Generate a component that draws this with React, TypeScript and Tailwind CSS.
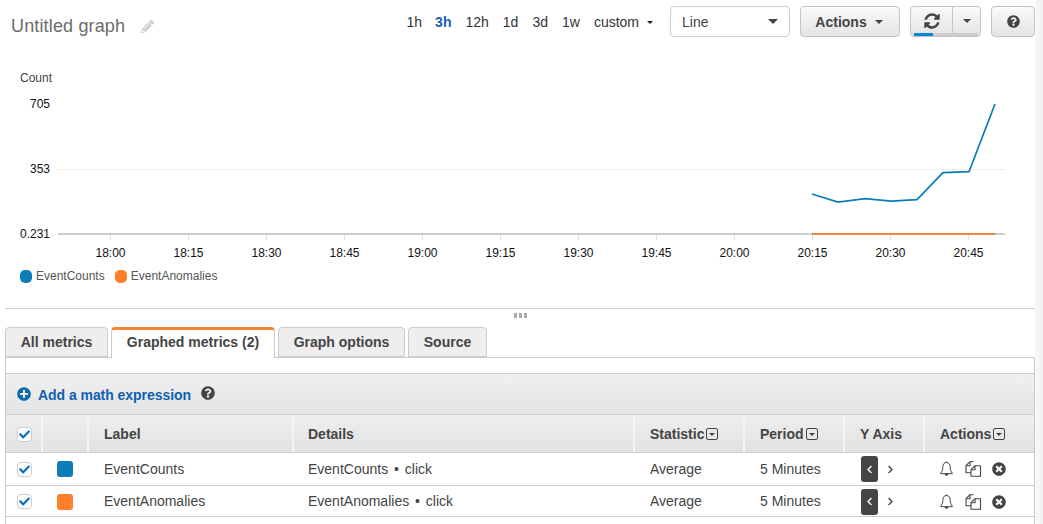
import { FaPencilAlt, FaQuestionCircle, FaTimesCircle, FaPlusCircle, FaCheck, FaChevronLeft, FaChevronRight } from 'react-icons/fa';

const tabs = [
  { label: 'All metrics', width: 'w-[103px]' },
  { label: 'Graphed metrics (2)', width: 'w-[164px]', active: true },
  { label: 'Graph options', width: 'w-[127px]' },
  { label: 'Source', width: 'w-[79px]' },
];

const ranges = ['1h', '3h', '12h', '1d', '3d', '1w'];
const xTicks = ['18:00', '18:15', '18:30', '18:45', '19:00', '19:15', '19:30', '19:45', '20:00', '20:15', '20:30', '20:45'];

const metrics = [
  { label: 'EventCounts', color: 'bg-[#0b7eb8]', height: 'h-[33px]' },
  { label: 'EventAnomalies', color: 'bg-[#ff7f2a]', height: 'h-[31px] pt-[1px]' },
];

const columns = 'grid grid-cols-[37px_46px_205px_341px_110px_100px_80px_1fr]';

function Caret({ className }: { className?: string }) {
  return (
    <svg width="10" height="5" viewBox="0 0 10 5" className={className} fill="currentColor">
      <path d="M0 0h10L5 5z" />
    </svg>
  );
}

function RefreshIcon() {
  return (
    <svg width="18" height="18" viewBox="0 0 1792 1792" fill="#444">
      <path d="M1639 1056q0 5-1 7-64 268-268 434.5t-478 166.5q-146 0-282.5-55t-243.5-157l-129 129q-19 19-45 19t-45-19-19-45v-448q0-26 19-45t45-19h448q26 0 45 19t19 45-19 45l-137 137q71 66 161 102t187 36q134 0 250-65t186-179q11-17 53-117 8-23 30-23h192q13 0 22.5 9.5t9.5 22.5zm25-800v448q0 26-19 45t-45 19h-448q-26 0-45-19t-19-45 19-45l138-138q-148-137-349-137-134 0-250 65t-186 179q-11 17-53 117-8 23-30 23h-199q-13 0-22.5-9.5t-9.5-22.5v-7q65-268 270-434.5t480-166.5q146 0 284 55.5t245 156.5l130-129q19-19 45-19t45 19 19 45z" />
    </svg>
  );
}

function BellIcon() {
  return (
    <svg width="13" height="16" viewBox="0 0 13 16" fill="none" stroke="#444" strokeWidth="1">
      <path d="M6.5 1.5c-2.4 0-3.6 1.8-3.6 4 0 3.2-.9 5-2.2 6.6v.6h11.6v-.6c-1.3-1.6-2.2-3.4-2.2-6.6 0-2.2-1.2-4-3.6-4z" />
      <path d="M6.5 .5v1" />
      <path d="M5 13.2c.2 1.6 2.8 1.6 3 0z" fill="#444" />
    </svg>
  );
}

function PagesIcon() {
  return (
    <svg width="17" height="16" viewBox="0 0 17 16" fill="none" stroke="#444" strokeWidth="1.1" strokeLinejoin="round">
      <path d="M8.5 .7H5L1 4.7v7h5" />
      <path d="M5 .7v4H1" />
      <path d="M15.5 4.7H10L6 8.7v6.6h9.5z" fill="#fff" />
      <path d="M10 4.7v4H6" />
    </svg>
  );
}

function Checkbox() {
  return (
    <span className="flex h-[15px] w-[15px] items-center justify-center rounded-[4px] border border-[#ccc] bg-white">
      <FaCheck className="text-[11px] text-[#0a6ebd]" />
    </span>
  );
}

function SortBox() {
  return (
    <span className="ml-[2px] flex h-[12px] w-[12px] items-center justify-center rounded-[2px] border border-[#444]">
      <Caret className="h-[3px] w-[6px] text-[#444]" />
    </span>
  );
}

function HeadCell({ children, className }: { children?: React.ReactNode; className?: string }) {
  return (
    <div className={`flex items-center border-r-2 border-[#f4f4f4] ${className ?? ''}`}>{children}</div>
  );
}

function Chart() {
  return (
    <svg width="1035" height="205" viewBox="0 60 1035 205" className="block" style={{ fontFamily: '"Liberation Sans", sans-serif' }}>
      <text x="20" y="82" fontSize="12" fill="#444">Count</text>
      <text x="30" y="108" fontSize="12" fill="#111">705</text>
      <text x="30" y="173" fontSize="12" fill="#111">353</text>
      <text x="20" y="238" fontSize="12" fill="#111">0.231</text>
      <line x1="58" y1="169.5" x2="1005" y2="169.5" stroke="#eee" />
      <line x1="58" y1="234" x2="1005" y2="234" stroke="#ccc" strokeWidth="2" />
      {xTicks.map((tick, i) => {
        const x = 110.5 + i * 78;
        return (
          <g key={tick}>
            <line x1={x} y1="235" x2={x} y2="240" stroke="#ddd" />
            <text x={x} y="257" fontSize="12" fill="#111" textAnchor="middle">{tick}</text>
          </g>
        );
      })}
      <line x1="812" y1="234" x2="995" y2="234" stroke="#f0873f" strokeWidth="2" />
      <polyline
        points="812,194 838,202 865,198.7 891,201 917,199.7 943,172.7 969,171.7 995,104"
        fill="none"
        stroke="#0b7eb8"
        strokeWidth="1.75"
      />
    </svg>
  );
}

export default function App() {
  return (
    <div className="flex h-[524px] w-[1043px] overflow-hidden bg-white font-['Liberation_Sans',sans-serif] text-[14px] text-[#444]">
      <div className="w-[1035px] shrink-0">
        {/* Header */}
        <div className="flex h-[60px] items-start pl-[11px]">
          <h1 className="mt-[14px] text-[18px] leading-[24px] tracking-[0.15px] text-[#6b6b6b]">Untitled graph</h1>
          <FaPencilAlt className="ml-[16px] mt-[20px] text-[13px] text-[#ccc]" />
          <div className="ml-auto mt-[6px] flex items-start">
            <div className="mt-[6px] flex items-center text-[14px] leading-[20px] text-[#333]">
              {ranges.map((r) => (
                <span key={r} className={`mr-[14px] ${r === '3h' ? '-ml-[1px] font-bold text-[#1a5fb4]' : ''}`}>{r}</span>
              ))}
              <span>custom</span>
              <Caret className="ml-[8px] h-[3px] w-[6px] text-[#222]" />
            </div>
            <div className="ml-[17px] flex h-[31px] w-[120px] items-center justify-between rounded-[4px] border border-[#ccc] bg-white pl-[11px] pr-[11px]">
              <span className="pt-[1px] text-[#444]">Line</span>
              <Caret className="text-[#444]" />
            </div>
            <div className="ml-[10px] flex h-[31px] w-[100px] items-center justify-center gap-[8px] rounded-[4px] border border-[#c4c4c4] bg-gradient-to-b from-[#fafafa] to-[#e4e4e4] pr-[2px] pt-[1px] font-bold text-[#444]">
              Actions
              <Caret className="h-[4px] w-[8px]" />
            </div>
            <div className="relative ml-[10px] flex h-[31px] w-[71px] rounded-[4px] border border-[#c4c4c4] bg-gradient-to-b from-[#fafafa] to-[#e4e4e4]">
              <div className="flex w-[42px] items-center justify-center border-r border-[#c4c4c4] pb-[1px]">
                <RefreshIcon />
              </div>
              <div className="flex flex-1 items-center justify-center pb-[2px]">
                <Caret className="h-[4px] w-[8px] text-[#444]" />
              </div>
              <div className="absolute bottom-0 left-[3px] right-[2px] h-[3px] bg-[#ccc]">
                <div className="h-full w-[19px] bg-[#0a84d6]" />
              </div>
            </div>
            <div className="ml-[10px] flex h-[31px] w-[44px] shrink-0 items-center justify-center rounded-[4px] border border-[#c4c4c4] bg-gradient-to-b from-[#fafafa] to-[#e4e4e4]">
              <FaQuestionCircle className="text-[13px] text-[#444]" />
            </div>
          </div>
        </div>

        <Chart />

        {/* Legend */}
        <div className="flex h-[22px] items-center pl-[20px] text-[12px] text-[#555]">
          <span className="mr-[4px] h-[13px] w-[12px] rounded-[5px] bg-[#0b7eb8]" />
          <span>EventCounts</span>
          <span className="ml-[10px] mr-[4px] h-[13px] w-[12px] rounded-[5px] bg-[#ff7f2a]" />
          <span>EventAnomalies</span>
        </div>

        {/* Resize handle */}
        <div className="ml-[5px] mt-[21px] flex h-[19px] justify-center gap-[2px] border-t border-[#ccc] pt-[4px]">
          <span className="h-[5px] w-[3px] bg-[#aaa]" />
          <span className="h-[5px] w-[3px] bg-[#aaa]" />
          <span className="h-[5px] w-[3px] bg-[#aaa]" />
        </div>

        {/* Tabs */}
        <div className="ml-[5px] flex h-[30px] items-end gap-[3px]">
          {tabs.map((t) => (
            <div
              key={t.label}
              className={`flex items-center justify-center rounded-t-[4px] border border-[#ccc] text-[14px] font-bold text-[#444] ${t.width} ${
                t.active
                  ? 'relative z-10 h-[31px] -mb-px border-b-0 border-t-[3px] border-t-[#f58536] bg-white pb-[3px]'
                  : 'h-[30px] bg-[#eee] pt-[1px]'
              }`}
            >
              {t.label}
            </div>
          ))}
        </div>

        {/* Panel */}
        <div className="ml-[5px] h-[167px] border-x border-t border-[#ccc]">
          <div className="h-[16px] border-b border-[#ccc]" />
          <div className="flex h-[41px] items-center border-b border-[#ccc] bg-gradient-to-b from-[#f0f0f0] to-[#e4e4e4] pl-[11px]">
            <FaPlusCircle className="text-[14px] text-[#0a6ab0]" />
            <span className="ml-[7px] pt-[2px] font-bold tracking-[-0.05px] text-[#0f5fb0]">Add a math expression</span>
            <FaQuestionCircle className="ml-[10px] -mt-[2px] text-[14px] text-[#444]" />
          </div>
          <div className={`${columns} h-[38px] border-b border-[#ccc] bg-gradient-to-b from-[#eee] to-[#e2e2e2] pt-[1px] font-bold`}>
            <HeadCell className="pl-[11px]"><Checkbox /></HeadCell>
            <HeadCell />
            <HeadCell className="pl-[15px]">Label</HeadCell>
            <HeadCell className="pl-[14px]">Details</HeadCell>
            <HeadCell className="pl-[15px]">Statistic<SortBox /></HeadCell>
            <HeadCell className="pl-[15px]">Period<SortBox /></HeadCell>
            <HeadCell className="pl-[15px]">Y Axis</HeadCell>
            <div className="flex items-center pl-[15px]">Actions<SortBox /></div>
          </div>
          {metrics.map((m) => (
            <div key={m.label} className={`${columns} ${m.height} items-center border-b border-[#ccc]`}>
              <div className="pl-[11px]"><Checkbox /></div>
              <div className="pl-[14px]"><span className={`block h-[16px] w-[16px] rounded-[3px] ${m.color}`} /></div>
              <div className="pl-[15px]">{m.label}</div>
              <div className="pl-[14px]">{m.label} <span className="mx-[2px]">•</span> click</div>
              <div className="pl-[15px]">Average</div>
              <div className="pl-[15px]">5 Minutes</div>
              <div className="flex items-center pl-[16px]">
                <span className="flex h-[26px] w-[17px] items-center justify-center rounded-[3px] bg-[#444]">
                  <FaChevronLeft className="text-[9px] text-white" />
                </span>
                <FaChevronRight className="ml-[8px] text-[9px] text-[#444]" />
              </div>
              <div className="flex items-center pl-[15px] text-[#444]">
                <BellIcon />
                <span className="ml-[12px]"><PagesIcon /></span>
                <FaTimesCircle className="ml-[10px] text-[14px]" />
              </div>
            </div>
          ))}
        </div>
      </div>
      <div className="flex-1 bg-gradient-to-r from-[#f8f8f8] to-[#f2f2f2]" />
    </div>
  );
}
